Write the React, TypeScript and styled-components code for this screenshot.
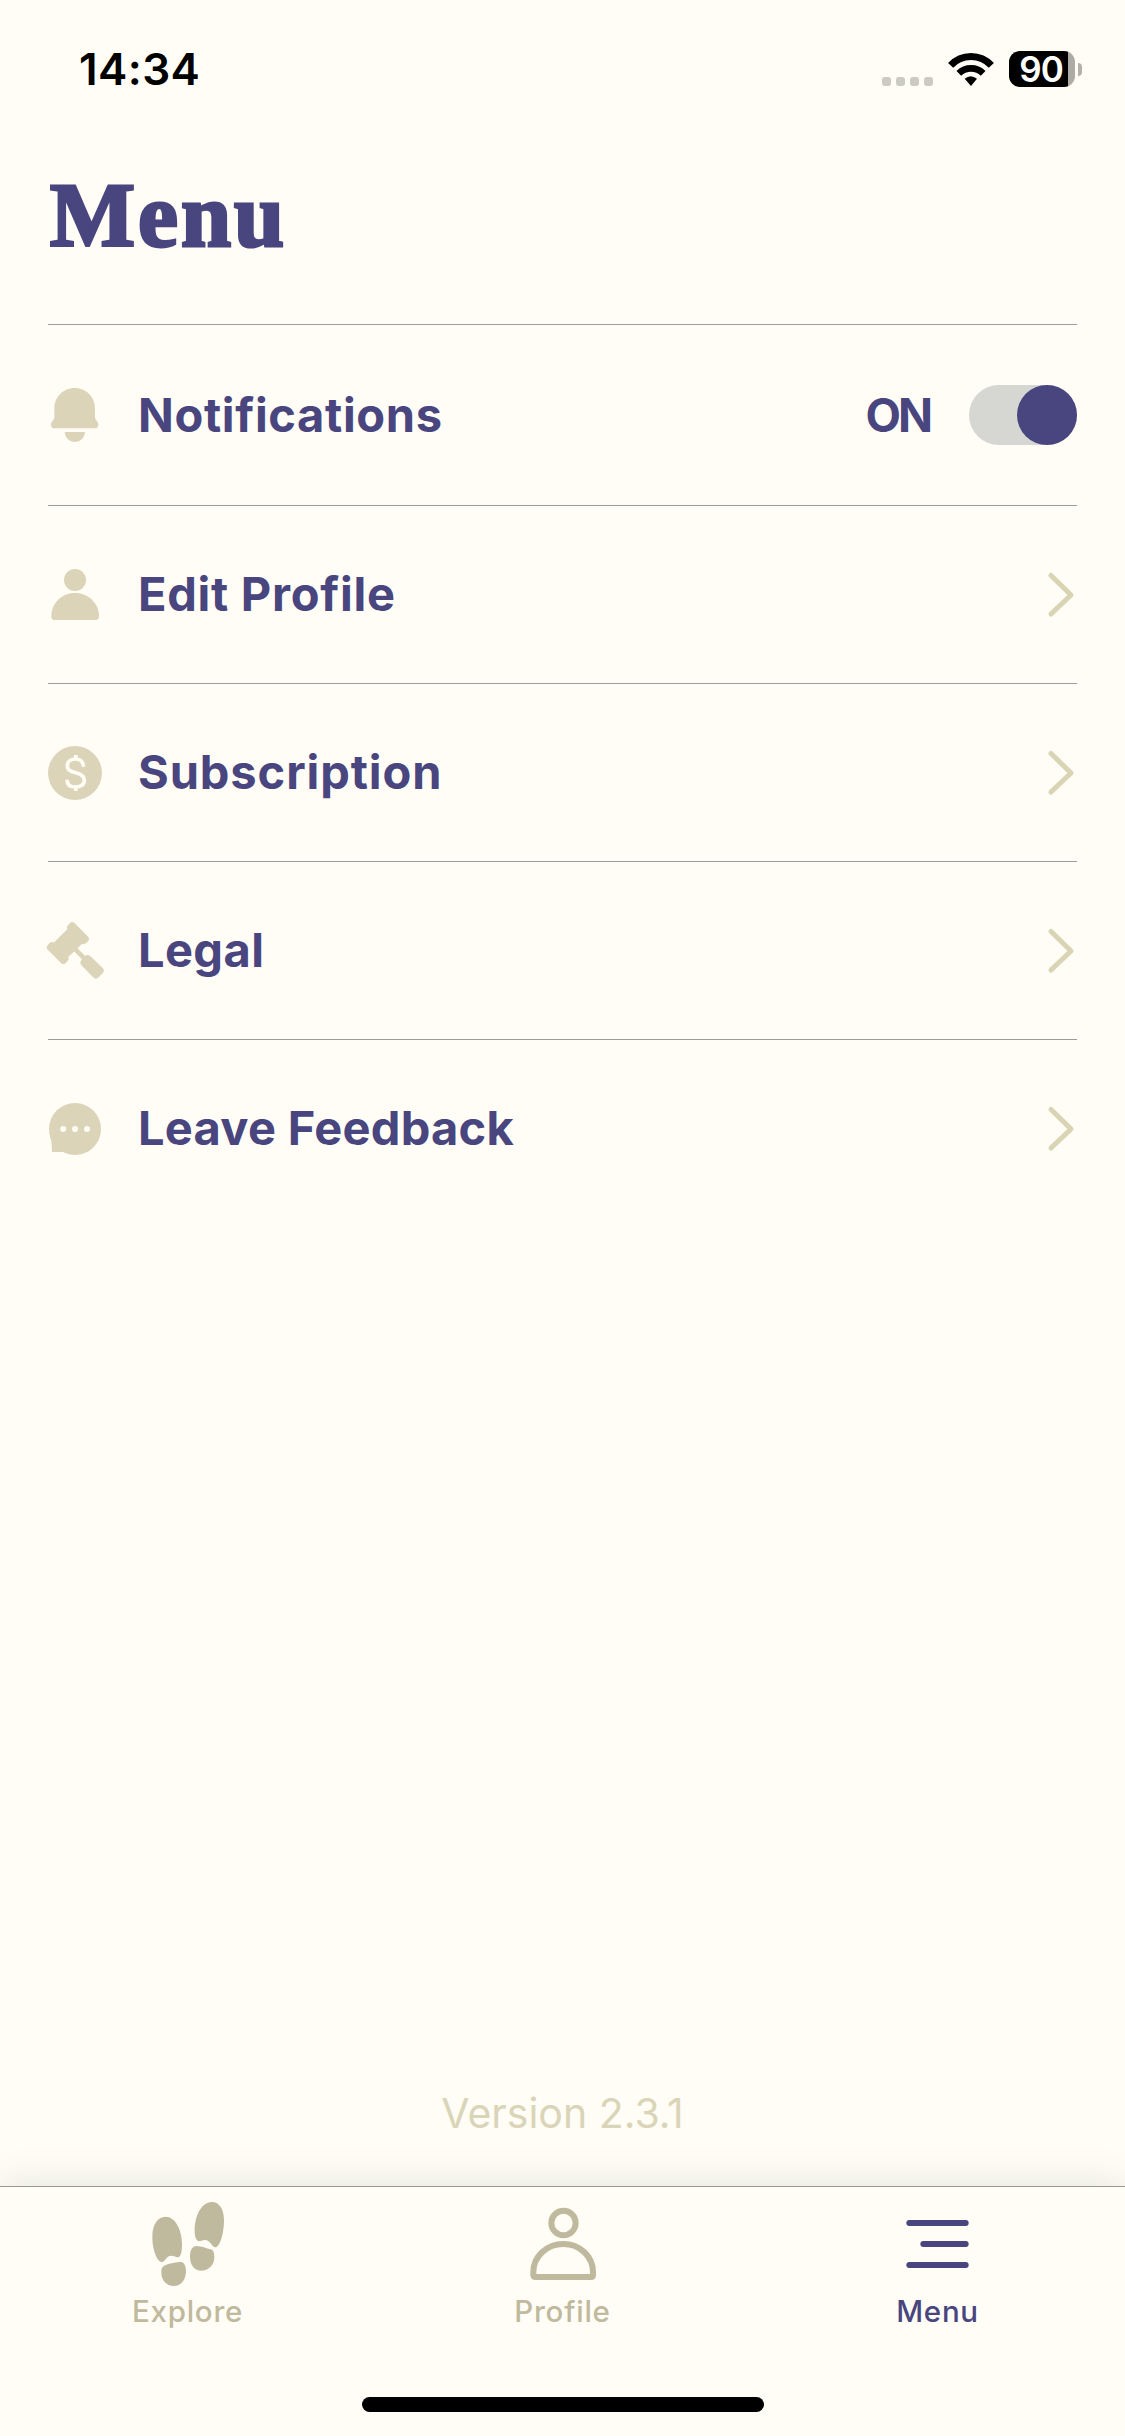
import React, { useState } from 'react';
import styled, { createGlobalStyle } from 'styled-components';

const color = {
  paper: '#fffdf5',
  indigo: '#48457f',
  sand: '#dcd4b9',
  chevron: '#d8d4b4',
  tab: '#bfb99e',
  rule: '#a09c97',
};

const GlobalStyle = createGlobalStyle`
  *, *::before, *::after { box-sizing: border-box; }
  body { margin: 0; background: ${color.paper}; }
  button { font: inherit; color: inherit; background: none; border: 0; padding: 0; }
`;

const Screen = styled.div`
  display: flex;
  flex-direction: column;
  width: 1125px;
  height: 2436px;
  overflow: hidden;
  background: ${color.paper};
  color: ${color.indigo};
  font-family: Inter, "Liberation Sans", sans-serif;
`;

const StatusBar = styled.header`
  display: flex;
  align-items: center;
  justify-content: space-between;
  height: 138px;
  padding: 0 43px 0 79px;
  color: #000;
`;

const Clock = styled.span`
  font-size: 44px;
  font-weight: 600;
  line-height: 54px;
  letter-spacing: 0.4px;
`;

const StatusIcons = styled.div`
  display: flex;
  align-items: center;
`;

const SignalDots = styled.div`
  display: flex;
  gap: 5px;
  margin: 24px 15px 0 0;
`;

const SignalDot = styled.i`
  width: 9px;
  height: 9px;
  border-radius: 3px;
  background: #cccbc3;
`;

const WifiIcon = styled.svg`
  width: 46px;
  height: 35px;
  margin-right: 15px;
`;

const Battery = styled.div`
  display: flex;
  align-items: center;
  gap: 3px;
`;

const BatteryBody = styled.div<{ $level: number }>`
  display: flex;
  align-items: center;
  justify-content: center;
  width: 66px;
  height: 36px;
  padding-right: 2px;
  border-radius: 11px;
  background: linear-gradient(90deg, #000 ${(p) => p.$level}%, #adaca4 ${(p) => p.$level}%);
  color: #fff;
  font-size: 35px;
  font-weight: 640;
  line-height: 36px;
  letter-spacing: -0.9px;
`;

const BatteryCap = styled.i`
  width: 4px;
  height: 13px;
  border-radius: 0 6px 6px 0;
  background: #b3b2aa;
`;

const Title = styled.h1`
  margin: 0;
  height: 186px;
  padding: 23px 50px 0;
  font-family: "Liberation Serif", "Times New Roman", serif;
  font-size: 90px;
  font-weight: 700;
  line-height: 110px;
  letter-spacing: 3px;
  -webkit-text-stroke: 3px ${color.indigo};
`;

const MenuList = styled.ul`
  display: flex;
  flex-direction: column;
  margin: 0;
  padding: 0 48px;
  list-style: none;
`;

const MenuRow = styled.li`
  display: flex;
  align-items: center;
  padding: 60px 0;
  border-top: 1px solid ${color.rule};
`;

const IconSlot = styled.span`
  display: flex;
  justify-content: center;
  width: 54px;
  margin-right: 36px;
`;

const RowIcon = styled.svg<{ $height?: number }>`
  flex: none;
  width: 60px;
  height: ${(p) => p.$height ?? 57}px;
  overflow: visible;
  fill: ${color.sand};
`;

const RowLabel = styled.span<{ $tracking: number }>`
  flex: 1;
  padding-bottom: 1px;
  font-size: 47px;
  font-weight: 660;
  line-height: 56px;
  letter-spacing: ${(p) => p.$tracking}px;
`;

const SwitchState = styled.span`
  margin-right: 39px;
  padding-bottom: 1px;
  font-size: 46px;
  font-weight: 660;
  line-height: 56px;
  letter-spacing: -3px;
`;

const Switch = styled.button<{ $on: boolean }>`
  display: flex;
  justify-content: ${(p) => (p.$on ? 'flex-end' : 'flex-start')};
  width: 108px;
  height: 60px;
  border-radius: 30px;
  background: #d6d6d2;
`;

const Knob = styled.i`
  width: 60px;
  height: 60px;
  border-radius: 50%;
  background: ${color.indigo};
`;

const Chevron = styled.svg`
  width: 30px;
  height: 47px;
  fill: none;
  stroke: ${color.chevron};
  stroke-width: 5;
  stroke-linecap: round;
  stroke-linejoin: round;
`;

const Version = styled.p`
  margin: auto 0 0;
  padding-bottom: 49px;
  font-size: 41px;
  line-height: 48px;
  text-align: center;
  color: #dad5b8;
`;

const TabBar = styled.nav`
  display: grid;
  grid-template-columns: repeat(3, 1fr);
  height: 211px;
  border-top: 1px solid #9a9991;
  background: ${color.paper};
  box-shadow: 0 0 36px rgba(90, 100, 90, 0.17);
`;

const Tab = styled.button<{ $active?: boolean }>`
  display: flex;
  flex-direction: column;
  align-items: center;
  padding-top: 13px;
  color: ${(p) => (p.$active ? color.indigo : color.tab)};
`;

const TabIcon = styled.svg`
  width: 85px;
  height: 87px;
  overflow: visible;
`;

const TabLabel = styled.span`
  margin-top: 6px;
  font-size: 29.5px;
  font-weight: 460;
  line-height: 36px;
  letter-spacing: 0.75px;
`;

const HomeArea = styled.footer`
  display: flex;
  justify-content: center;
  height: 39px;
  background: ${color.paper};
`;

const HomeIndicator = styled.i`
  width: 402px;
  height: 15px;
  border-radius: 8px;
  background: #000;
`;

const Bell = () => (
  <RowIcon $height={60} viewBox="45 75 180 180">
    <path d="M134 84C168 84 195 111 195 145V172C195 181 205 184 205 194C205 201 200 205 194 205H73C67 205 63 201 63 194C63 184 73 181 73 172V145C73 111 100 84 134 84Z" />
    <path d="M104 216H165C163 235 150 246 134.5 246C119 246 106 235 104 216Z" />
  </RowIcon>
);

const Person = () => (
  <RowIcon viewBox="45 618 180 171">
    <circle cx="135" cy="660" r="33" />
    <path d="M135 699C175 699 207 730 207 768C207 776 204 780 198 780H73C67 780 64 776 64 768C64 730 95 699 135 699Z" />
  </RowIcon>
);

const Dollar = () => (
  <RowIcon viewBox="45 72 180 171">
    <circle cx="135" cy="159" r="81" />
    <path
      d="M161 140C159 125 151 117 137 117C122 117 112 125 112 137C112 150 121 154 137 158C153 162 163 168 163 181C163 194 152 201 137 201C121 201 111 194 111 179M137.500 105V116M137.500 202V213"
      fill="none"
      stroke={color.paper}
      strokeWidth="11"
    />
  </RowIcon>
);

const Gavel = () => (
  <RowIcon viewBox="45 606 180 171">
    <path d="M115 625L71 668L114 712L159 669Z" />
    <rect x="106" y="625.500" width="76" height="28" rx="10" transform="rotate(45 144 639.5)" />
    <rect x="45" y="685" width="76" height="28" rx="10" transform="rotate(45 83 699)" />
    <path d="M130 682L170 722" stroke={color.sand} strokeWidth="14" />
    <path d="M165 709Q172 702 180 707L218 744Q225 751 219 758L206 772Q199 780 191 773L154 736Q148 729 154 720Z" />
  </RowIcon>
);

const Bubble = () => (
  <RowIcon viewBox="45 270 180 171">
    <circle cx="135" cy="357" r="78" />
    <path d="M58 370Q65 386 66 426H103L125 433V370Z" />
    <g fill={color.paper}>
      <circle cx="99.500" cy="357" r="9" />
      <circle cx="135" cy="357" r="9" />
      <circle cx="171" cy="357" r="9" />
    </g>
  </RowIcon>
);

const Footprints = () => (
  <TabIcon viewBox="135 90 255 261" fill="currentColor">
    <path d="M197 140C225 140 246 178 246 222C246 240 244 258 236 262C229 262 222 257 213 257C198 257 196 276 186 276C172 276 157 240 157 200C157 165 172 140 197 140Z" />
    <path d="M188 291C195 281 225 278 240 275C252 274 258 288 258 303C258 328 244 348 222 348C198 348 184 328 184 308C184 300 184 296 188 291Z" />
    <path d="M336 96C358 96 372 118 372 150C372 195 358 232 346 232C336 232 332 210 315 210C306 210 303 214 296 214C288 210 284 200 284 182C284 140 303 96 336 96Z" />
    <path d="M290 228C305 228 318 235 332 238C341 240 343 250 343 262C343 282 328 302 305 302C283 302 270 284 270 260C270 242 276 228 290 228Z" />
  </TabIcon>
);

const ProfileOutline = () => (
  <TabIcon viewBox="360 420 255 261" fill="none" stroke="currentColor" strokeWidth="18">
    <circle cx="490.500" cy="489" r="36.500" />
    <path d="M490 552C540 552 579 590 579 636V645Q579 651 573 651H407Q400 651 400 645V636C400 590 440 552 490 552Z" />
  </TabIcon>
);

const MenuBars = () => (
  <TabIcon viewBox="135 90 255 261" fill="none" stroke="currentColor" strokeWidth="18" strokeLinecap="round">
    <path d="M178 159H347M220 222H347M178 285H347" />
  </TabIcon>
);

const linkRows = [
  { label: 'Edit Profile', tracking: 0.72, Icon: Person },
  { label: 'Subscription', tracking: 0.9, Icon: Dollar },
  { label: 'Legal', tracking: 0.4, Icon: Gavel },
  { label: 'Leave Feedback', tracking: 0.28, Icon: Bubble },
];

const tabs = [
  { label: 'Explore', Icon: Footprints },
  { label: 'Profile', Icon: ProfileOutline },
  { label: 'Menu', Icon: MenuBars },
];

export default function App() {
  const [notify, setNotify] = useState(true);
  const [active, setActive] = useState('Menu');

  return (
    <Screen>
      <GlobalStyle />
      <StatusBar>
        <Clock>14:34</Clock>
        <StatusIcons>
          <SignalDots>
            <SignalDot />
            <SignalDot />
            <SignalDot />
            <SignalDot />
          </SignalDots>
          <WifiIcon viewBox="324 63 138 105">
            <g fill="none" stroke="#000">
              <path d="M332 103A83 83 0 0 1 454 103" strokeWidth="21" />
              <path d="M356.500 127A52 52 0 0 1 429.500 127" strokeWidth="20" />
            </g>
            <path d="M374 143Q392 128 411 143L393 165Z" />
          </WifiIcon>
          <Battery>
            <BatteryBody $level={90}>90</BatteryBody>
            <BatteryCap />
          </Battery>
        </StatusIcons>
      </StatusBar>

      <Title>Menu</Title>

      <MenuList>
        <MenuRow>
          <IconSlot>
            <Bell />
          </IconSlot>
          <RowLabel $tracking={0.65}>Notifications</RowLabel>
          <SwitchState>{notify ? 'ON' : 'OFF'}</SwitchState>
          <Switch $on={notify} role="switch" aria-checked={notify} onClick={() => setNotify(!notify)}>
            <Knob />
          </Switch>
        </MenuRow>
        {linkRows.map(({ label, tracking, Icon }) => (
          <MenuRow key={label}>
            <IconSlot>
              <Icon />
            </IconSlot>
            <RowLabel $tracking={tracking}>{label}</RowLabel>
            <Chevron viewBox="0 0 30 47">
              <path d="M4 4.500L24 24L4 43" />
            </Chevron>
          </MenuRow>
        ))}
      </MenuList>

      <Version>Version 2.3.1</Version>

      <TabBar>
        {tabs.map(({ label, Icon }) => (
          <Tab key={label} $active={label === active} onClick={() => setActive(label)}>
            <Icon />
            <TabLabel>{label}</TabLabel>
          </Tab>
        ))}
      </TabBar>
      <HomeArea>
        <HomeIndicator />
      </HomeArea>
    </Screen>
  );
}
